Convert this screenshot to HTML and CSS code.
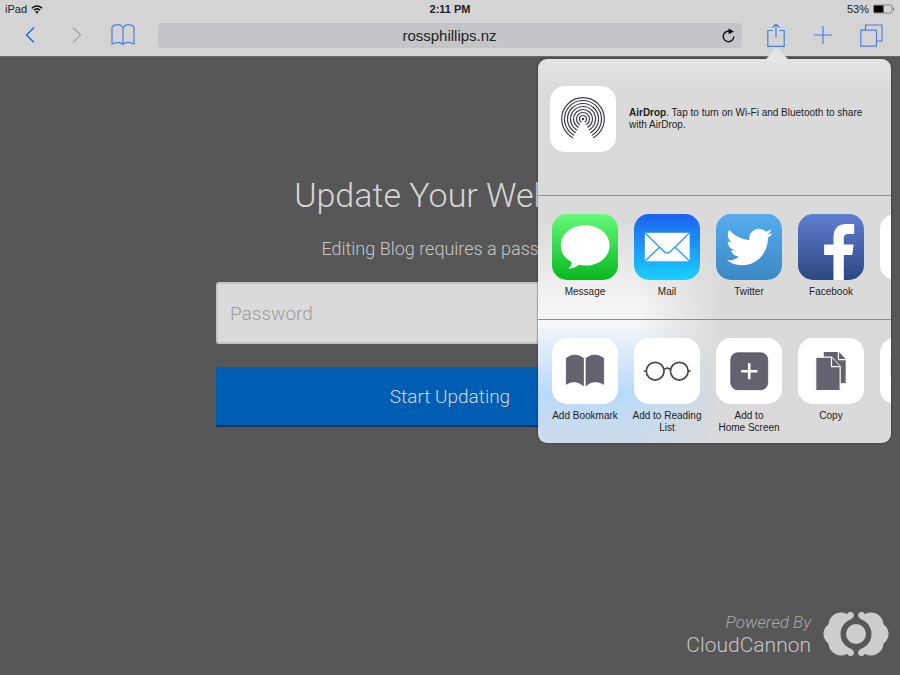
FILE: index.html
```html
<!DOCTYPE html>
<html lang="en">
<head>
<meta charset="utf-8">
<meta name="viewport" content="width=device-width, initial-scale=1">
<title>rossphillips.nz</title>
<link rel="stylesheet" href="styles.css">
</head>
<body>
<header class="chrome">
  <div class="status">
    <span class="status-left">iPad
      <svg width="12" height="9" viewBox="0 0 12 9" fill="none" stroke="#111" stroke-width="1.5" aria-hidden="true"><path d="M.8 3.2Q6-1.3 11.2 3.2M2.8 5.3Q6 2.5 9.2 5.3"/><path d="M4.2 6.7Q6 5.3 7.800 6.700L6 8.800Z" fill="#111" stroke="none"/></svg>
    </span>
    <span class="status-time">2:11 PM</span>
    <span class="status-right">53%
      <svg width="22" height="10" viewBox="0 0 22 10" aria-hidden="true"><rect x=".5" y="1" width="18.500" height="8" rx="1.200" fill="none" stroke="#888"/><path d="M1 1.500h9.500v7H1z" fill="#000"/><path d="M20 3.500q1.500 1.500 0 3z" fill="#111"/></svg>
    </span>
  </div>
  <nav class="toolbar" aria-label="Browser">
    <button class="tool back" aria-label="Back"><svg width="10" height="18" viewBox="0 0 10 18"><path d="M9 1.500 1.500 9 9 16.500" stroke-width="1.500"/></svg></button>
    <button class="tool forward" aria-label="Forward"><svg width="10" height="18" viewBox="0 0 10 18"><path d="M1 1.500 8.500 9 1 16.500" stroke-width="1.300"/></svg></button>
    <button class="tool books" aria-label="Bookmarks"><svg width="24" height="22" viewBox="0 0 24 22"><path d="M12 3.500Q9-.5 4 1.200 1 2 1 3.500V20Q8 16.500 12 20.500 16 16.500 23 20V3.500Q23 2 20 1.200 15-.5 12 3.500V20.500"/></svg></button>
    <div class="address">
      <input class="url" type="text" value="rossphillips.nz" aria-label="Address">
      <button class="reload" aria-label="Reload"><svg width="13" height="15" viewBox="0 0 13 15"><path d="M9.700 4.200A5.300 5.300 0 1 0 11.800 8.400" fill="none" stroke="#111" stroke-width="1.400"/><path d="M6.500.5 12 3.500 6.500 6.300Z" fill="#111"/></svg></button>
    </div>
    <button class="tool share" aria-label="Share"><svg width="18" height="24" viewBox="0 0 18 24"><path d="M6 7.500H.8V23.300H17.200V7.500H12M9 15V1.500M5.500 4.500 9 1 12.500 4.500"/></svg></button>
    <button class="tool plus" aria-label="New tab"><svg width="18" height="18" viewBox="0 0 18 18"><path d="M9 0V18M0 9H18"/></svg></button>
    <button class="tool tabs" aria-label="Tabs"><svg width="23" height="23" viewBox="0 0 23 23"><path d="M.8 6.200H16.500V22.200H.8ZM5.500 6V1H22V17H17"/></svg></button>
  </nav>

  <section class="popover" aria-label="Share">
    <svg class="tip" width="28" height="12" viewBox="0 0 28 12" aria-hidden="true"><path d="M0 12Q4 11 6 8L11.500 1.500Q14-1 16.500 1.500L22 8Q24 11 28 12Z" fill="#e3e5e5"/></svg>
    <div class="sheet">
      <div class="airdrop">
        <button class="tile" aria-label="AirDrop"><svg width="46" height="46" viewBox="0 0 46 46"><g fill="none" stroke="#3d3b4a" stroke-width="1.200"><circle cx="23" cy="23" r="3.500"/><circle cx="23" cy="23" r="6.500"/><circle cx="23" cy="23" r="9.500"/><circle cx="23" cy="23" r="12.500"/><circle cx="23" cy="23" r="15.500"/><circle cx="23" cy="23" r="18.500"/><circle cx="23" cy="23" r="21.300"/></g><path d="M23 23.500 10.500 46H35.500Z" fill="#fff"/><circle cx="23" cy="23" r="1.300" fill="#3d3b4a"/></svg></button>
        <p class="airdrop-text"><strong>AirDrop</strong>. Tap to turn on Wi-Fi and Bluetooth to share with AirDrop.</p>
      </div>
      <div class="row">
        <button class="item"><span class="tile message"><svg viewBox="0 0 67 67"><path d="M34 11.500C20 11.500 9 20.300 9 32c0 7.500 4.300 13.300 11 16.800 0 2.700-1.200 4.700-3 6.700 4 0 7.800-1.500 10.200-3.900 2 .5 4.400.8 6.800.8 13.700 0 24.500-9 24.500-20.400S47.700 11.500 34 11.500Z" fill="#fff"/></svg></span>Message</button>
        <button class="item"><span class="tile mail"><svg viewBox="0 0 67 67"><path d="M11 19H56.500V48H11Z" fill="#fff"/><path d="M11 19 30 37.500Q33.700 41.500 37.500 37.500L56.500 19M11 48 26 33.500M56.500 48 41.500 33.500" fill="none" stroke="#269af6" stroke-width="1.300"/></svg></span>Mail</button>
        <button class="item"><span class="tile twitter"><svg viewBox="0 0 67 67"><path d="M57.500 19.300c-1.700.8-3.500 1.300-5.300 1.500 1.900-1.200 3.300-2.900 4-5-1.700 1-3.700 1.800-5.700 2.200A9.700 9.700 0 0 0 34 26.500C26.200 26 19 22.300 13.300 16.300c-2.700 4.600-1.200 9.800 2.700 12.500-1.500 0-2.900-.5-4.100-1.100 0 4.700 3.100 8.200 7.200 9.100-1.300.4-2.800.4-4 .1 1.100 3.600 4.400 6.200 8.400 6.400-3.500 2.800-7.700 4-12.500 3.700C15.400 50.200 20.500 52 26 52c17.200 0 27-14.200 26.700-27.800 1.900-1.300 3.500-3 4.800-4.900Z" fill="#fff"/></svg></span>Twitter</button>
        <button class="item"><span class="tile facebook"><svg viewBox="0 0 67 67"><path d="M36 67V41.500H26.500V31H36V24C36 14.500 41 10.200 49 10.200H57V20.200H51.500C48 20.200 46.500 21.500 46.500 24.700V31H56.500L55 41.500H46.500V67Z" fill="#fff"/></svg></span>Facebook</button>
        <button class="item" aria-label="More apps"><span class="tile"></span></button>
      </div>
      <div class="row">
        <button class="item"><span class="tile"><svg viewBox="0 0 67 67"><path d="M14.500 20.500Q23 14 32 20.500V48.500Q23 41 14.500 47ZM34.500 20.500Q43 14 52.500 20.500V47Q43 41 34.500 48.500Z" fill="#63626f" stroke="#4d4b58" stroke-width=".6"/></svg></span>Add Bookmark</button>
        <button class="item"><span class="tile"><svg viewBox="0 0 67 67" fill="none" stroke="#454350" stroke-width="1.700"><circle cx="21.500" cy="33.700" r="9"/><circle cx="46" cy="33.700" r="9"/><path d="M30.300 32Q33.700 29.300 37.200 32M9.800 33.500H12.500M55 33.500H57.700"/></svg></span>Add to Reading List</button>
        <button class="item"><span class="tile"><svg viewBox="0 0 67 67"><rect x="15" y="15" width="37.500" height="37.500" rx="7" fill="#63626f" stroke="#4a4856" stroke-width=".7"/><path d="M33.700 25.500V42M25.500 33.700H42" stroke="#fff" stroke-width="2.600"/></svg></span>Add to<br>Home Screen</button>
        <button class="item"><span class="tile"><svg viewBox="0 0 67 67"><g fill="#63626f" stroke="#fff" stroke-width="1.200"><path d="M25.500 13.500H41L49 22V46.500H25.500Z"/><path d="M41 13.500V22H49"/><path d="M18 19.500H34L42.800 29V53.500H18Z"/><path d="M34 19.500V29H42.800"/></g></svg></span>Copy</button>
        <button class="item" aria-label="More actions"><span class="tile"><svg viewBox="0 0 67 67"><rect x="11" y="20" width="44" height="19" fill="#63626f"/></svg></span></button>
      </div>
    </div>
  </section>
</header>

<main class="page">
  <h1>Update Your Website</h1>
  <p class="lead">Editing Blog requires a password</p>
  <form class="login">
    <input class="password" type="password" placeholder="Password" aria-label="Password">
    <button class="submit" type="button">Start Updating</button>
  </form>
</main>

<footer class="footer">
  <a class="brand" href="#">
    <span class="brand-text"><em>Powered By</em><span class="brand-name">CloudCannon</span></span>
    <svg width="66" height="46" viewBox="0 0 66 46" aria-hidden="true"><g fill="#cdcdcd"><circle cx="18" cy="14" r="12.500"/><circle cx="12" cy="23" r="11.500"/><circle cx="18" cy="32" r="12.500"/><circle cx="48" cy="14" r="12.500"/><circle cx="54" cy="23" r="11.500"/><circle cx="48" cy="32" r="12.500"/><path d="M16 8 27 2V44L16 38ZM50 8 39 2V44L50 38Z"/></g><circle cx="33" cy="23" r="15.500" fill="#575757"/><path d="M30 0H36V46H30Z" fill="#575757"/><g fill="#cdcdcd"><circle cx="33" cy="23" r="10"/><circle cx="27.500" cy="4.200" r="3.300"/><circle cx="38.500" cy="4.200" r="3.300"/><circle cx="27.500" cy="41.800" r="3.300"/><circle cx="38.500" cy="41.800" r="3.300"/></g></svg>
  </a>
</footer>
</body>
</html>
```
FILE: styles.css
```css
* { box-sizing: border-box; }

body {
  margin: 0;
  min-height: 100vh;
  display: flex;
  flex-direction: column;
  background: #575757;
  color: #d6d6d6;
  font-family: Roboto, "Liberation Sans", sans-serif;
  font-weight: 300;
}

button {
  padding: 0;
  border: 0;
  background: none;
  font: inherit;
  color: inherit;
}

svg { display: block; }

.chrome {
  position: relative;
  background: #d4d4d4;
  border-bottom: 1px solid #6a6a6a;
  color: #222;
  font-family: "Liberation Sans", Arial, sans-serif;
  font-weight: 400;
}

.status {
  display: grid;
  grid-template-columns: 1fr auto 1fr;
  align-items: center;
  height: 18px;
  padding: 0 5px;
  font-size: 11px;
}

.status-left,
.status-right {
  display: flex;
  align-items: center;
  gap: 4px;
}

.status-right { justify-content: flex-end; }

.status-time { font-weight: 700; }

.toolbar {
  display: flex;
  align-items: center;
  height: 38px;
  padding: 0 17px 4px 25px;
}

.tool {
  flex: none;
  color: #4d7fe0;
}

.tool svg {
  fill: none;
  stroke: currentColor;
  stroke-width: 1.2;
}

.back { color: #1a6fe8; margin-right: 37px; }
.forward { color: #a4a4a4; margin-right: 29px; }
.books { margin-right: 23px; }
.share { margin-right: 29px; }
.plus { margin-right: 28px; }

.address {
  flex: 1;
  display: flex;
  align-items: center;
  height: 25px;
  margin-right: 25px;
  padding: 0 7px 0 19px;
  border-radius: 4px;
  background: #c3c5c8;
}

.url {
  flex: 1;
  min-width: 0;
  padding: 0;
  border: 0;
  background: none;
  color: #222;
  font: 15px "Liberation Sans", Arial, sans-serif;
  text-align: center;
}

.popover {
  position: absolute;
  top: 59px;
  right: 9px;
  width: 353px;
  color: #222;
  font-size: 10px;
  line-height: 12px;
}

.tip {
  position: absolute;
  top: -11px;
  right: 100px;
}

.sheet {
  overflow: hidden;
  border-radius: 9px;
  background:
    linear-gradient(to right, transparent 28%, #dadada 52%) 0 100% / 100% 248px no-repeat,
    linear-gradient(#e3e5e5, #dadada 8%, #dadada 42%, #f4f4f4 63%, #f5f7f8 69%, #b9dafb 87%, #cfdce8);
  box-shadow: 0 0 2px #222;
}

.airdrop {
  display: flex;
  align-items: center;
  gap: 13px;
  height: 136px;
  padding: 0 16px 16px 12px;
}

.airdrop-text { margin: 0; }

.row {
  display: grid;
  grid-template-columns: repeat(5, 82px);
  align-items: start;
  height: 124px;
  padding: 18px 0 0 6px;
  border-top: 1px solid #8b8b8b;
}

.item {
  display: flex;
  flex-direction: column;
  align-items: center;
  gap: 6px;
  line-height: 12px;
}

.tile {
  display: grid;
  place-items: center;
  flex: none;
  width: 66px;
  height: 66px;
  border-radius: 15px;
  background: #fff;
  overflow: hidden;
}

.item .tile svg { width: 100%; height: 100%; }

.message { background: linear-gradient(#67f97b, #06b81f); }
.mail { background: linear-gradient(#1d62f0, #1bcffd); }
.twitter { background: linear-gradient(#55acee, #3b88c3); }
.facebook { background: linear-gradient(#5f7fd0, #2d4784); }

.page {
  width: 52%;
  margin: 0 auto;
  text-align: center;
}

h1 {
  margin: 117px 0 0;
  font-size: 34px;
  font-weight: 300;
  line-height: 42px;
}

.lead {
  margin: 21px 0;
  color: #c6c6c6;
  font-size: 18px;
  line-height: 24px;
}

.login {
  display: grid;
  gap: 23px;
}

.password {
  width: 100%;
  height: 62px;
  padding: 0 12px;
  border: 2px solid #c3c3c3;
  border-radius: 3px;
  background: #dadada;
  font: 300 19px Roboto, sans-serif;
}

.password::placeholder { color: #9c9c9c; }

.submit {
  height: 60px;
  border-bottom: 2px solid #06346b;
  border-radius: 2px;
  background: #005eb2;
  color: #d0d6e0;
  font-size: 19px;
}

.footer {
  display: flex;
  justify-content: flex-end;
  margin-top: auto;
  padding: 0 11px 18px;
}

.brand {
  display: flex;
  align-items: center;
  gap: 12px;
  color: #c4c4c4;
  text-decoration: none;
}

.brand-text {
  display: grid;
  text-align: right;
  line-height: 23px;
}

.brand-text em { color: #a9a9a9; font-size: 17px; }
.brand-name { font-size: 21px; }
```
